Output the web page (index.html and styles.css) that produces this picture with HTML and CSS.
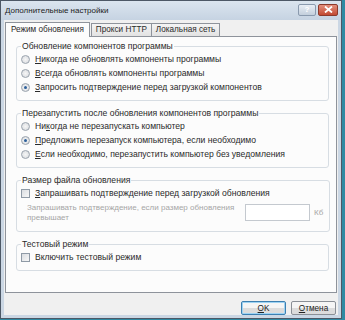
FILE: index.html
```html
<!DOCTYPE html>
<html lang="ru">
<head>
    <meta charset="UTF-8">
    <title>Дополнительные настройки</title>
    <link rel="stylesheet" href="styles.css">
</head>
<body>
    <div class="window">
        <div class="titlebar">
            <span class="title">Дополнительные настройки</span>
            <div class="tb-buttons">
                <span class="tb-help">?</span>
                <span class="tb-close">
                    <svg width="9" height="7" viewBox="0 0 9 7"><path d="M1 0.5 L8 6.5 M8 0.5 L1 6.5" stroke="#fff" stroke-width="1.8"/></svg>
                </span>
            </div>
        </div>

        <div class="client">
            <!-- tabs -->
            <div class="tabs">
                <div class="tab active">Режим обновления</div>
                <div class="tab">Прокси HTTP</div>
                <div class="tab">Локальная сеть</div>
            </div>

            <div class="page">
                <fieldset class="group">
                    <legend>Обновление компонентов программы</legend>
                    <label class="opt"><span class="radio"></span><span><u>Н</u>икогда не обновлять компоненты программы</span></label>
                    <label class="opt"><span class="radio"></span><span><u>В</u>сегда обновлять компоненты программы</span></label>
                    <label class="opt"><span class="radio on"></span><span><u>З</u>апросить подтверждение перед загрузкой компонентов</span></label>
                </fieldset>

                <fieldset class="group">
                    <legend>Перезапустить после обновления компонентов программы</legend>
                    <label class="opt"><span class="radio"></span><span>Ни<u>к</u>огда не перезапускать компьютер</span></label>
                    <label class="opt"><span class="radio on"></span><span><u>П</u>редложить перезапуск компьютера, если необходимо</span></label>
                    <label class="opt"><span class="radio"></span><span><u>Е</u>сли необходимо, перезапустить компьютер без уведомления</span></label>
                </fieldset>

                <fieldset class="group">
                    <legend>Размер файла обновления</legend>
                    <label class="opt"><span class="check"></span><span><u>З</u>апрашивать подтверждение перед загрузкой обновления</span></label>
                    <div class="size-row">
                        <span class="disabled">Запрашивать подтверждение, если размер обновления<br>превышает</span>
                        <span class="size-input"></span>
                        <span class="disabled unit">Кб</span>
                    </div>
                </fieldset>

                <fieldset class="group">
                    <legend>Тестовый режим</legend>
                    <label class="opt"><span class="check"></span><span>Включить тестовый режим</span></label>
                </fieldset>
            </div>

            <div class="buttons">
                <button class="btn default"><u>O</u>K</button>
                <button class="btn"><u>О</u>тмена</button>
            </div>
        </div>
    </div>
</body>
</html>
```

FILE: styles.css
```css
html, body {
    margin: 0;
    padding: 0;
}

body {
    width: 345px;
    height: 320px;
    background: #2f8aa3;
    font-family: "Liberation Sans", Arial, sans-serif;
    font-size: 8.6px;
    color: #2a2a2a;
    overflow: hidden;
}

.window {
    width: 342px;
    height: 319px;
    box-sizing: border-box;
    border: 1px solid #4d5866;
    background: #cbd7e4;
    display: flex;
    flex-direction: column;
}

.titlebar {
    height: 19px;
    display: flex;
    align-items: center;
    justify-content: space-between;
    padding: 0 3px 0 4px;
    background: linear-gradient(#dbe5ef, #c6d3e2);
}

.title {
    font-size: 8px;
    color: #1c1c1c;
}

.tb-buttons {
    display: flex;
    gap: 2px;
    margin-top: -2px;
}

.tb-help {
    width: 16px;
    height: 10px;
    border: 1px solid #8a9aae;
    border-radius: 2px;
    background: linear-gradient(#e8eef5, #c3cfdc);
    color: #fff;
    font-size: 8px;
    font-weight: bold;
    line-height: 10px;
    text-align: center;
}

.tb-close {
    width: 18px;
    height: 10px;
    border: 1px solid #8c3a2c;
    border-radius: 2px;
    background: linear-gradient(#e4907e, #c24a33);
    display: flex;
    align-items: center;
    justify-content: center;
}

.client {
    flex: 1;
    margin: 0 3px 3px 3px;
    background: #f0f0f0;
    padding: 2px 1px 0 1px;
    display: flex;
    flex-direction: column;
}

.tabs {
    display: flex;
    padding-left: 2px;
    height: 14px;
    align-items: flex-end;
    font-size: 8.2px;
}

.tab {
    height: 12px;
    line-height: 12px;
    padding: 0 4px;
    border: 1px solid #8e939b;
    border-bottom: none;
    margin-right: -1px;
    background: linear-gradient(#f4f4f4, #e2e2e2);
    white-space: nowrap;
}

.tab.active {
    height: 14px;
    line-height: 14px;
    background: #fcfcfc;
    position: relative;
    z-index: 1;
    margin: 0 1px -1px -2px;
    padding: 0 5px;
}

.page {
    height: 257px;
    box-sizing: border-box;
    border: 1px solid #8e939b;
    background: #fcfcfc;
    padding: 4px 7px 0 10px;
}

.group {
    margin: 0 0 7px 0;
    padding: 0 6px 6px 4px;
    border: 1px solid #d7dde3;
    border-radius: 3px;
}

.group legend {
    padding: 0 1px;
    margin-left: 0;
    line-height: 11px;
}

.opt {
    display: flex;
    align-items: center;
    height: 14px;
    white-space: nowrap;
}

.radio {
    width: 7px;
    height: 7px;
    border: 1px solid #9aa3ad;
    border-radius: 50%;
    background: radial-gradient(#f6f6f6, #d6d9dd);
    margin-right: 5px;
    position: relative;
    flex: none;
}

.radio.on::after {
    content: "";
    position: absolute;
    left: 2px;
    top: 2px;
    width: 3px;
    height: 3px;
    border-radius: 50%;
    background: #2c5f9a;
}

.check {
    width: 7px;
    height: 7px;
    border: 1px solid #8f9aa6;
    background: linear-gradient(135deg, #dadde1, #f7f7f7);
    margin-right: 5px;
    flex: none;
}

.size-row {
    display: flex;
    align-items: center;
    padding-left: 6px;
    height: 25px;
}

.disabled {
    color: #a6a6a6;
    font-size: 8px;
    width: 218px;
    line-height: 10px;
    white-space: nowrap;
}

.size-input {
    width: 63px;
    height: 15px;
    border: 1px solid #c4c9cf;
    background: #fff;
}

.unit {
    width: auto;
    margin-left: 4px;
}

.buttons {
    display: flex;
    justify-content: flex-end;
    gap: 5px;
    padding: 8px 1px 0 0;
}

.btn {
    width: 45px;
    height: 14px;
    padding: 0;
    font-family: "Liberation Sans", Arial, sans-serif;
    font-size: 8.2px;
    color: #222;
    border: 1px solid #8a8f96;
    border-radius: 2px;
    background: linear-gradient(#f5f5f5 50%, #dcdcdc 50%);
}

.btn.default {
    border-color: #3c7fb1;
    box-shadow: inset 0 0 0 1px #9ed3f3;
}
```
